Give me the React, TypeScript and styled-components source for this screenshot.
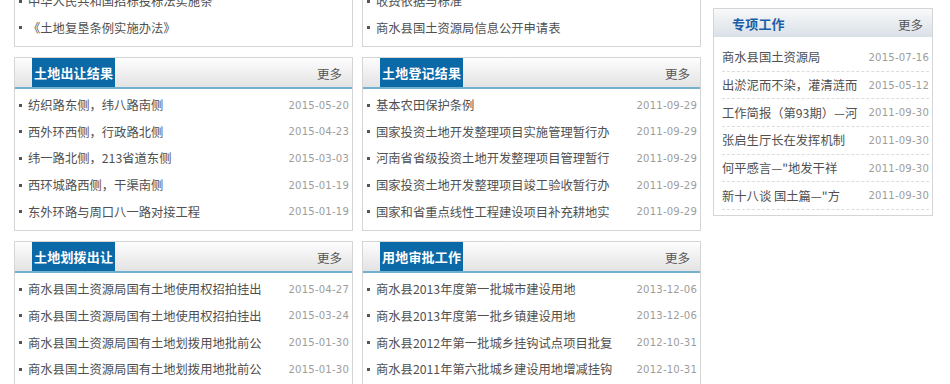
import React, { FC } from 'react';
import styled, { createGlobalStyle } from 'styled-components';

const GlobalStyle = createGlobalStyle`
  html, body {
    margin: 0;
    padding: 0;
    background: #fff;
    overflow: hidden;
  }
  body {
    font-family: "Noto Sans CJK SC", "Microsoft YaHei", sans-serif;
    color: #555;
  }
`;

const Page = styled.div`
  display: flex;
  align-items: flex-start;
  padding-left: 14px;
  width: 950px;
  height: 384px;
  overflow: hidden;
  box-sizing: border-box;
`;

const Main = styled.div`
  display: grid;
  grid-template-columns: 339px 339px;
  column-gap: 9px;
  row-gap: 10px;
  margin-top: -16px;
`;

const Side = styled.div`
  width: 220px;
  margin-left: 12px;
  margin-top: 8px;
`;

const Box = styled.section`
  border: 1px solid #d5d5d5;
  background: #fff;
`;

const Bar = styled.div`
  display: flex;
  justify-content: space-between;
  height: 29px;
  padding: 0 10px 0 17px;
  background: linear-gradient(#fdfdfd, #e3e3e3);
  border-bottom: 2px solid #72b0cf;
`;

const Tab = styled.h3`
  margin: 0;
  display: flex;
  align-items: center;
  padding: 0 2px;
  background: #0b69a7;
  color: #fff;
  font-size: 13px;
  font-weight: bold;
  letter-spacing: 0.2px;
`;

const More = styled.a`
  align-self: center;
  margin-top: 2px;
  font-size: 12.5px;
  color: #555;
  text-decoration: none;
  cursor: pointer;
`;

const List = styled.ul<{ $side?: boolean }>`
  list-style: none;
  margin: 0;
  padding: ${p => (p.$side ? '7px 3px 5px 8px' : '2.7px 3px 5px 4px')};
`;

const Row = styled.li<{ $side?: boolean }>`
  display: flex;
  align-items: center;
  height: 26.7px;
  font-size: 12.3px;
  border-bottom: ${p => (p.$side ? '1px dashed #dcdcdc' : 'none')};
`;

const Bullet = styled.i`
  flex: none;
  width: 3px;
  height: 3px;
  margin-right: 6px;
  background: #555;
`;

const Title = styled.span`
  flex: 1;
  min-width: 0;
  overflow: hidden;
  white-space: nowrap;
  color: #505050;
`;

const Date = styled.span`
  flex: none;
  margin-left: 4px;
  font-family: "DejaVu Sans Condensed", "Liberation Sans", sans-serif;
  font-size: 11.2px;
  color: #9c9c9c;
  letter-spacing: 0.2px;
`;

const SideBar = styled.div`
  display: flex;
  align-items: center;
  justify-content: space-between;
  height: 28px;
  padding: 0 9px 0 18px;
  background: linear-gradient(#f8f9fa, #d9e0e6);
`;

const SideTitle = styled.h3`
  margin: 0;
  font-size: 13px;
  font-weight: bold;
  color: #1b5ea8;
  letter-spacing: 0.2px;
`;

type Item = { title: string; date?: string };
type Panel = { name?: string; items: Item[] };

const panels: Panel[] = [
  { items: [{ title: '中华人民共和国招标投标法实施条' }, { title: '《土地复垦条例实施办法》' }] },
  { items: [{ title: '收费依据与标准' }, { title: '商水县国土资源局信息公开申请表' }] },
  {
    name: '土地出让结果',
    items: [
      { title: '纺织路东侧，纬八路南侧', date: '2015-05-20' },
      { title: '西外环西侧，行政路北侧', date: '2015-04-23' },
      { title: '纬一路北侧，213省道东侧', date: '2015-03-03' },
      { title: '西环城路西侧，干渠南侧', date: '2015-01-19' },
      { title: '东外环路与周口八一路对接工程', date: '2015-01-19' }
    ]
  },
  {
    name: '土地登记结果',
    items: [
      { title: '基本农田保护条例', date: '2011-09-29' },
      { title: '国家投资土地开发整理项目实施管理暂行办', date: '2011-09-29' },
      { title: '河南省省级投资土地开发整理项目管理暂行', date: '2011-09-29' },
      { title: '国家投资土地开发整理项目竣工验收暂行办', date: '2011-09-29' },
      { title: '国家和省重点线性工程建设项目补充耕地实', date: '2011-09-29' }
    ]
  },
  {
    name: '土地划拨出让',
    items: [
      { title: '商水县国土资源局国有土地使用权招拍挂出', date: '2015-04-27' },
      { title: '商水县国土资源局国有土地使用权招拍挂出', date: '2015-03-24' },
      { title: '商水县国土资源局国有土地划拨用地批前公', date: '2015-01-30' },
      { title: '商水县国土资源局国有土地划拨用地批前公', date: '2015-01-30' }
    ]
  },
  {
    name: '用地审批工作',
    items: [
      { title: '商水县2013年度第一批城市建设用地', date: '2013-12-06' },
      { title: '商水县2013年度第一批乡镇建设用地', date: '2013-12-06' },
      { title: '商水县2012年第一批城乡挂钩试点项目批复', date: '2012-10-31' },
      { title: '商水县2011年第六批城乡建设用地增减挂钩', date: '2012-10-31' }
    ]
  }
];

const special: Item[] = [
  { title: '商水县国土资源局', date: '2015-07-16' },
  { title: '出淤泥而不染，灌清涟而', date: '2015-05-12' },
  { title: '工作简报（第93期）—河', date: '2011-09-30' },
  { title: '张启生厅长在发挥机制', date: '2011-09-30' },
  { title: '何平感言—"地发干祥', date: '2011-09-30' },
  { title: '新十八谈 国土篇—"方', date: '2011-09-30' }
];

const NewsBox: FC<{ panel: Panel }> = ({ panel }) => (
  <Box>
    {panel.name && (
      <Bar>
        <Tab>{panel.name}</Tab>
        <More>更多</More>
      </Bar>
    )}
    <List>
      {panel.items.map((item, index) => (
        <Row key={index}>
          <Bullet />
          <Title>{item.title}</Title>
          {item.date && <Date>{item.date}</Date>}
        </Row>
      ))}
    </List>
  </Box>
);

const App: FC = () => (
  <>
    <GlobalStyle />
    <Page>
      <Main>
        {panels.map((panel, index) => (
          <NewsBox key={index} panel={panel} />
        ))}
      </Main>
      <Side>
        <Box>
          <SideBar>
            <SideTitle>专项工作</SideTitle>
            <More>更多</More>
          </SideBar>
          <List $side>
            {special.map((item, index) => (
              <Row key={index} $side>
                <Title>{item.title}</Title>
                <Date>{item.date}</Date>
              </Row>
            ))}
          </List>
        </Box>
      </Side>
    </Page>
  </>
);

export default App;
